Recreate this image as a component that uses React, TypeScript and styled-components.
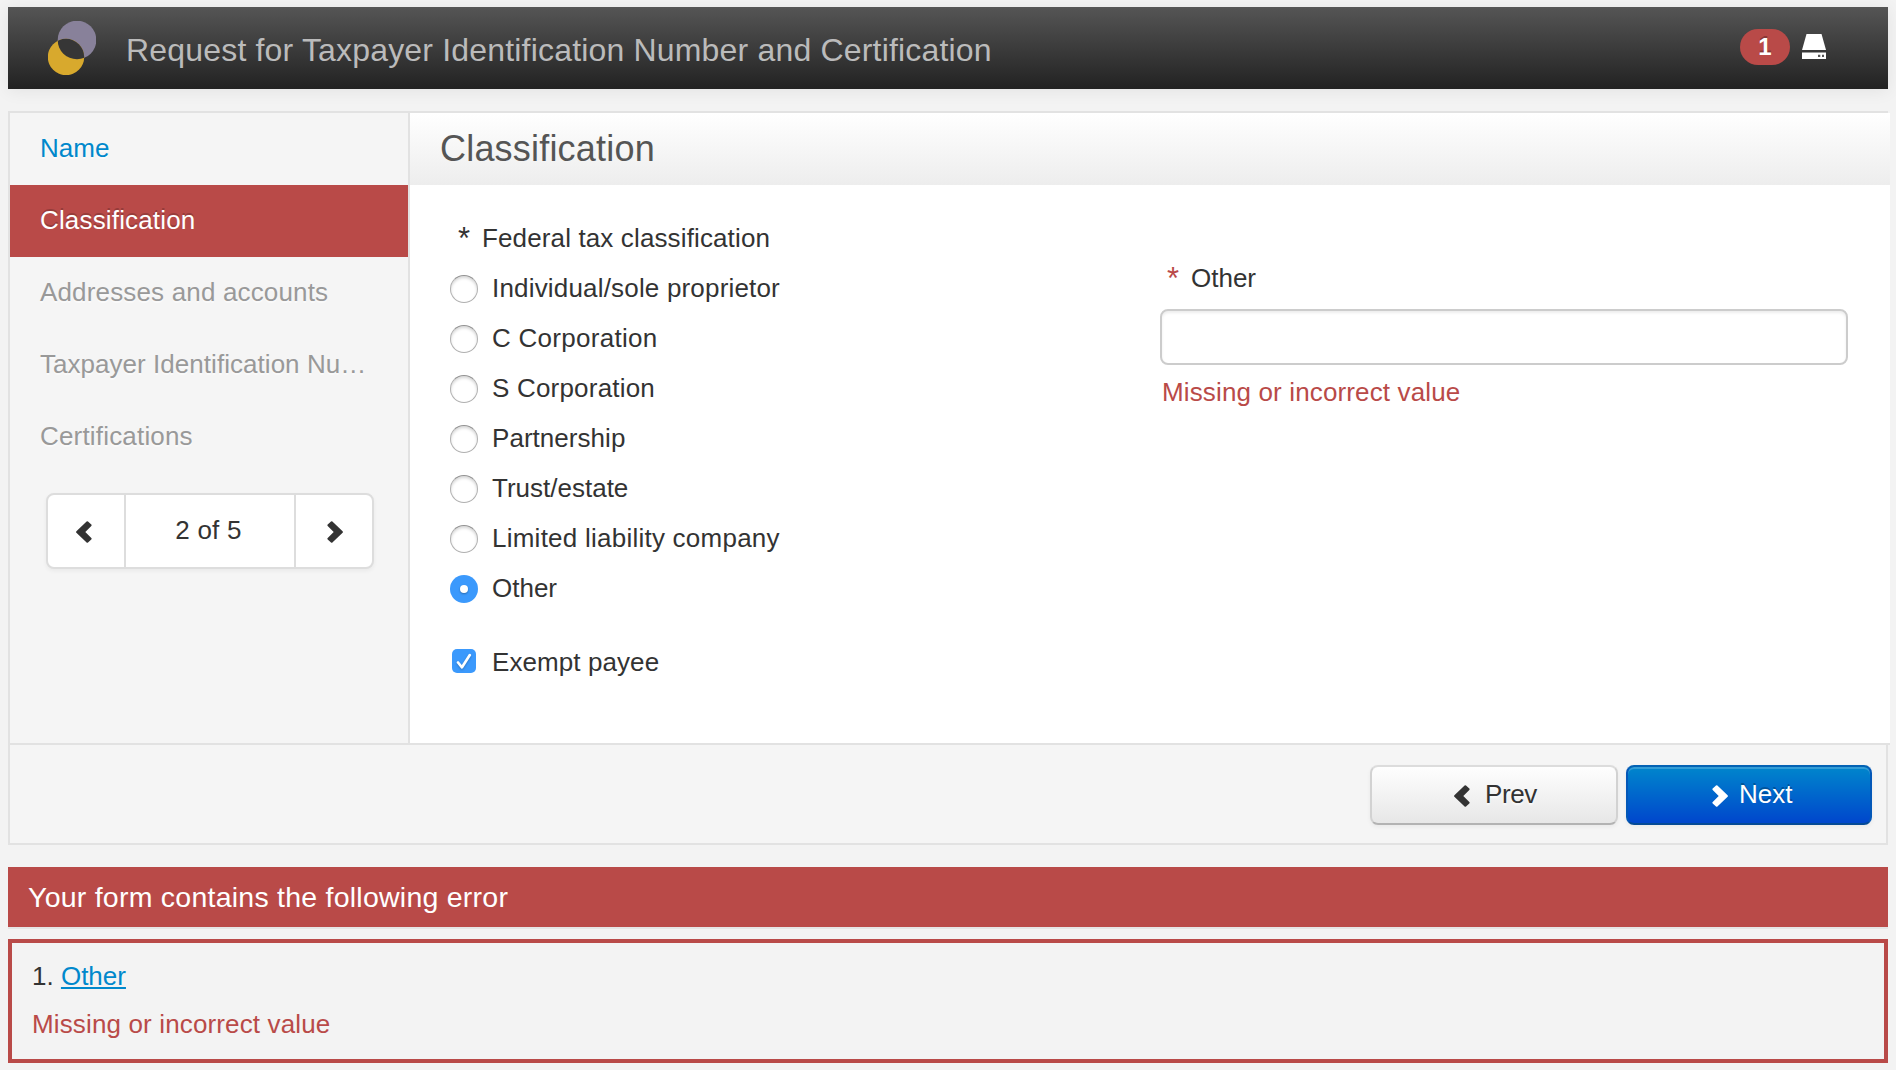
import React from "react";
import styled, { createGlobalStyle, css } from "styled-components";

const red = "#b94a48";
const line = "#e2e2e2";

const GlobalStyle = createGlobalStyle`
  * { box-sizing: border-box; }
  html, body { margin: 0; background: #f3f3f3; }
  body {
    height: 1070px;
    overflow: hidden;
    font-family: "Liberation Sans", Arial, sans-serif;
    font-size: 26px;
    color: #333;
  }
`;

const Text = styled.span<{ $ls?: number }>`
  letter-spacing: ${(p) => p.$ls ?? 0}px;
  white-space: nowrap;
`;

const Page = styled.div`
  padding: 7px 8px;
`;

const Header = styled.header`
  display: flex;
  align-items: flex-start;
  height: 82px;
  padding-left: 40px;
  padding-right: 62px;
  background: linear-gradient(#555, #222);
  box-shadow: 0 2px 16px rgba(0, 0, 0, 0.07);
`;

const Logo = styled.svg`
  display: block;
  margin-top: 14px;
`;

const AppTitle = styled.h1`
  flex: 1;
  margin: 0 0 0 30px;
  font-size: 32px;
  font-weight: 400;
  line-height: 86px;
  color: #bbb;
`;

const Badge = styled.span`
  width: 50px;
  height: 36px;
  margin-top: 22px;
  border-radius: 18px;
  background: ${red};
  color: #fff;
  font-size: 24px;
  font-weight: 700;
  line-height: 35px;
  text-align: center;
  text-shadow: 0 -2px 0 rgba(0, 0, 0, 0.25);
`;

const DriveIcon = styled.svg`
  display: block;
  margin: 27px 0 0 12px;
`;

const Panel = styled.section`
  margin-top: 22px;
  border: 2px solid ${line};
  background: #f5f5f5;
`;

const PanelBody = styled.div`
  display: flex;
  width: calc(100% + 4px);
  height: 632px;
  border-bottom: 2px solid ${line};
`;

const Sidebar = styled.nav`
  width: 400px;
  border-right: 2px solid ${line};
`;

const Step = styled.div<{ $state?: "link" | "active" }>`
  height: 72px;
  padding-left: 30px;
  line-height: 70px;
  color: #999;
  text-shadow: 0 2px 0 rgba(255, 255, 255, 0.5);
  ${(p) => p.$state === "link" && css`color: #08c;`}
  ${(p) =>
    p.$state === "active" &&
    css`
      color: #fff;
      background: ${red};
      text-shadow: 0 -2px 0 rgba(0, 0, 0, 0.2);
    `}
`;

const Pager = styled.div`
  display: grid;
  grid-template-columns: 76px 170px 78px;
  width: 328px;
  height: 76px;
  margin: 20px 0 0 36px;
  border: 2px solid #ddd;
  border-radius: 8px;
  background: #fff;
  box-shadow: 0 2px 4px rgba(0, 0, 0, 0.05);
`;

const PagerButton = styled.div<{ $next?: boolean }>`
  display: flex;
  align-items: center;
  justify-content: center;
  padding: ${(p) => (p.$next ? "2px 0 0 4px" : "2px 4px 0 0")};
`;

const PagerText = styled.div`
  padding-right: 3px;
  border: solid #ddd;
  border-width: 0 2px 0 2px;
  margin-right: -2px;
  line-height: 70px;
  text-align: center;
`;

const Main = styled.main`
  flex: 1;
  background: #fff;
`;

const SectionTitle = styled.h2`
  height: 72px;
  margin: 0;
  padding-left: 30px;
  background: linear-gradient(#fff, #ededed);
  font-size: 36px;
  font-weight: 400;
  line-height: 71px;
  color: #555;
`;

const Fields = styled.div`
  display: grid;
  grid-template-columns: 750px 688px;
`;

const LeftColumn = styled.div`
  padding: 28px 0 0 40px;
`;

const GroupLabel = styled.div`
  display: flex;
  height: 50px;
  line-height: 50px;
  padding-left: 8px;
`;

const Star = styled.span<{ $error?: boolean }>`
  width: 24px;
  font-size: 31px;
  line-height: 52px;
  color: ${(p) => (p.$error ? red : "#333")};
`;

const Option = styled.label<{ $gap?: number }>`
  display: flex;
  height: 50px;
  line-height: 50px;
  margin-top: ${(p) => p.$gap ?? 0}px;
`;

const OptionText = styled(Text)`
  margin-left: 14px;
`;

const Radio = styled.span<{ $on?: boolean }>`
  display: flex;
  align-items: center;
  justify-content: center;
  width: 28px;
  height: 28px;
  margin-top: 12px;
  border-radius: 50%;
  border: 1px solid #b0b0b0;
  border-top-color: #929292;
  background: #fff;
  box-shadow: inset 0 2px 3px rgba(0, 0, 0, 0.16);
  ${(p) =>
    p.$on &&
    css`
      border: 0;
      background: #3b99fc;
      box-shadow: none;
      &::after {
        content: "";
        width: 8px;
        height: 8px;
        border-radius: 50%;
        background: #fff;
        box-shadow: 0 1px 2px rgba(0, 0, 0, 0.3);
      }
    `}
`;

const Checkbox = styled.span`
  width: 24px;
  height: 24px;
  margin: 12px 2px 0;
  border-radius: 5px;
  background: #3b99fc;
  svg { display: block; filter: drop-shadow(0 1px 1px rgba(0, 0, 0, 0.25)); }
`;

const RightColumn = styled.div`
  padding-top: 68px;
`;

const FieldLabel = styled.div`
  display: flex;
  height: 56px;
  line-height: 50px;
  padding-left: 7px;
`;

const Input = styled.input`
  display: block;
  width: 688px;
  height: 56px;
  border: 2px solid #ccc;
  border-radius: 8px;
  background: #fff;
  box-shadow: inset 0 2px 3px rgba(0, 0, 0, 0.075);
  outline: none;
`;

const FieldError = styled.div`
  padding-left: 2px;
  line-height: 54px;
  color: ${red};
`;

const Footer = styled.footer`
  display: flex;
  justify-content: flex-end;
  gap: 8px;
  height: 98px;
  padding: 20px 14px 0 0;
`;

const Button = styled.button<{ $primary?: boolean }>`
  display: flex;
  width: ${(p) => (p.$primary ? 246 : 248)}px;
  height: 60px;
  padding: 0 0 0 ${(p) => (p.$primary ? 84 : 82)}px;
  border: 2px solid;
  border-color: #dcdcdc #d2d2d2 #b3b3b3;
  border-radius: 8px;
  background: linear-gradient(#fff, #e6e6e6) border-box;
  box-shadow: inset 0 2px 0 rgba(255, 255, 255, 0.2), 0 2px 4px rgba(0, 0, 0, 0.05);
  font: inherit;
  line-height: 54px;
  color: #333;
  text-shadow: 0 2px 2px rgba(255, 255, 255, 0.75);
  svg {
    margin: 18px ${(p) => (p.$primary ? 11 : 15)}px 0 0;
    flex: none;
  }
  ${(p) =>
    p.$primary &&
    css`
      color: #fff;
      border-color: #0362b4 #0458b8 #044a96;
      background: linear-gradient(#08c, #04c) border-box;
      text-shadow: 0 -2px 0 rgba(0, 0, 0, 0.25);
    `}
`;

const ErrorTitle = styled.h3`
  height: 62px;
  margin: 22px 0 10px;
  padding-left: 20px;
  border-bottom: 2px solid #e5e5e5;
  background: ${red} padding-box;
  font-size: 28.5px;
  font-weight: 400;
  line-height: 61px;
  color: #fff;
`;

const ErrorBox = styled.div`
  height: 124px;
  padding: 8px 20px;
  border: 4px solid ${red};
`;

const ErrorLine = styled.div<{ $message?: boolean }>`
  height: 48px;
  line-height: 50px;
  color: ${(p) => (p.$message ? red : "#333")};
`;

const ErrorLink = styled.a`
  color: #08c;
  text-decoration: underline;
  text-decoration-thickness: 2px;
  text-underline-offset: 2px;
  text-decoration-skip-ink: none;
`;

const Chevron = ({ right, color = "#333" }: { right?: boolean; color?: string }) => (
  <svg width="16" height="22" viewBox="0 0 16 22">
    <path
      d="M.4 10.2 10.6.5Q11.3 0 12 .6L15.3 3.6Q16 4.3 15.3 5L9.3 11 15.3 17Q16 17.7 15.3 18.4L12 21.4Q11.3 22 10.6 21.5L.4 11.8Q-.3 11 .4 10.2Z"
      fill={color}
      transform={right ? "translate(16 0) scale(-1 1)" : undefined}
    />
  </svg>
);

const options = [
  { label: "Individual/sole proprietor", ls: 0.18 },
  { label: "C Corporation", ls: 0.28 },
  { label: "S Corporation", ls: 0.2 },
  { label: "Partnership", ls: 0.04 },
  { label: "Trust/estate", ls: 0 },
  { label: "Limited liability company", ls: 0.24 },
  { label: "Other", ls: 0 },
];

export default function App() {
  return (
    <>
      <GlobalStyle />
      <Page>
        <Header>
          <Logo width="48" height="54" viewBox="0 0 48 54">
            <clipPath id="upper"><circle cx="29" cy="19" r="19.3" /></clipPath>
            <circle cx="29" cy="19" r="19.3" fill="#88819a" />
            <circle cx="18" cy="36" r="18.2" fill="#d8a92d" />
            <circle cx="18" cy="36" r="18.2" fill="#363636" clipPath="url(#upper)" />
          </Logo>
          <AppTitle><Text $ls={0.18}>Request for Taxpayer Identification Number and Certification</Text></AppTitle>
          <Badge>1</Badge>
          <DriveIcon width="24" height="25" viewBox="0 0 24 25">
            <path d="M4.5 0H19.5L24 16H0Z" fill="#fff" />
            <path d="M0 18.5H24V25H0Z" fill="#fff" />
            <path d="M16 20.7h2.3v2.4H16zM20 20.7h2v2.4h-2z" fill="#555" />
          </DriveIcon>
        </Header>

        <Panel>
          <PanelBody>
            <Sidebar>
              <Step $state="link"><Text>Name</Text></Step>
              <Step $state="active"><Text $ls={0.16}>Classification</Text></Step>
              <Step><Text $ls={0.16}>Addresses and accounts</Text></Step>
              <Step><Text $ls={0.04}>Taxpayer Identification Nu…</Text></Step>
              <Step><Text $ls={0.18}>Certifications</Text></Step>
              <Pager>
                <PagerButton><Chevron /></PagerButton>
                <PagerText><Text $ls={0.2}>2 of 5</Text></PagerText>
                <PagerButton $next><Chevron right /></PagerButton>
              </Pager>
            </Sidebar>
            <Main>
              <SectionTitle><Text $ls={0.2}>Classification</Text></SectionTitle>
              <Fields>
                <LeftColumn>
                  <GroupLabel><Star>*</Star><Text $ls={0.13}>Federal tax classification</Text></GroupLabel>
                  {options.map((o) => (
                    <Option key={o.label}>
                      <Radio $on={o.label === "Other"} />
                      <OptionText $ls={o.ls}>{o.label}</OptionText>
                    </Option>
                  ))}
                  <Option $gap={24}>
                    <Checkbox>
                      <svg width="24" height="24" viewBox="0 0 24 24">
                        <path d="M6 13.5 10 18.3 17.8 6" fill="none" stroke="#fff" strokeWidth="2.6" strokeLinecap="round" strokeLinejoin="round" />
                      </svg>
                    </Checkbox>
                    <OptionText $ls={0.08}>Exempt payee</OptionText>
                  </Option>
                </LeftColumn>
                <RightColumn>
                  <FieldLabel><Star $error>*</Star><Text>Other</Text></FieldLabel>
                  <Input />
                  <FieldError><Text $ls={0.14}>Missing or incorrect value</Text></FieldError>
                </RightColumn>
              </Fields>
            </Main>
          </PanelBody>
          <Footer>
            <Button><Chevron /><Text $ls={-0.4}>Prev</Text></Button>
            <Button $primary><Chevron right color="#fff" /><Text>Next</Text></Button>
          </Footer>
        </Panel>

        <ErrorTitle><Text $ls={0.24}>Your form contains the following error</Text></ErrorTitle>
        <ErrorBox>
          <ErrorLine><Text>1. </Text><ErrorLink>Other</ErrorLink></ErrorLine>
          <ErrorLine $message><Text $ls={0.14}>Missing or incorrect value</Text></ErrorLine>
        </ErrorBox>
      </Page>
    </>
  );
}
